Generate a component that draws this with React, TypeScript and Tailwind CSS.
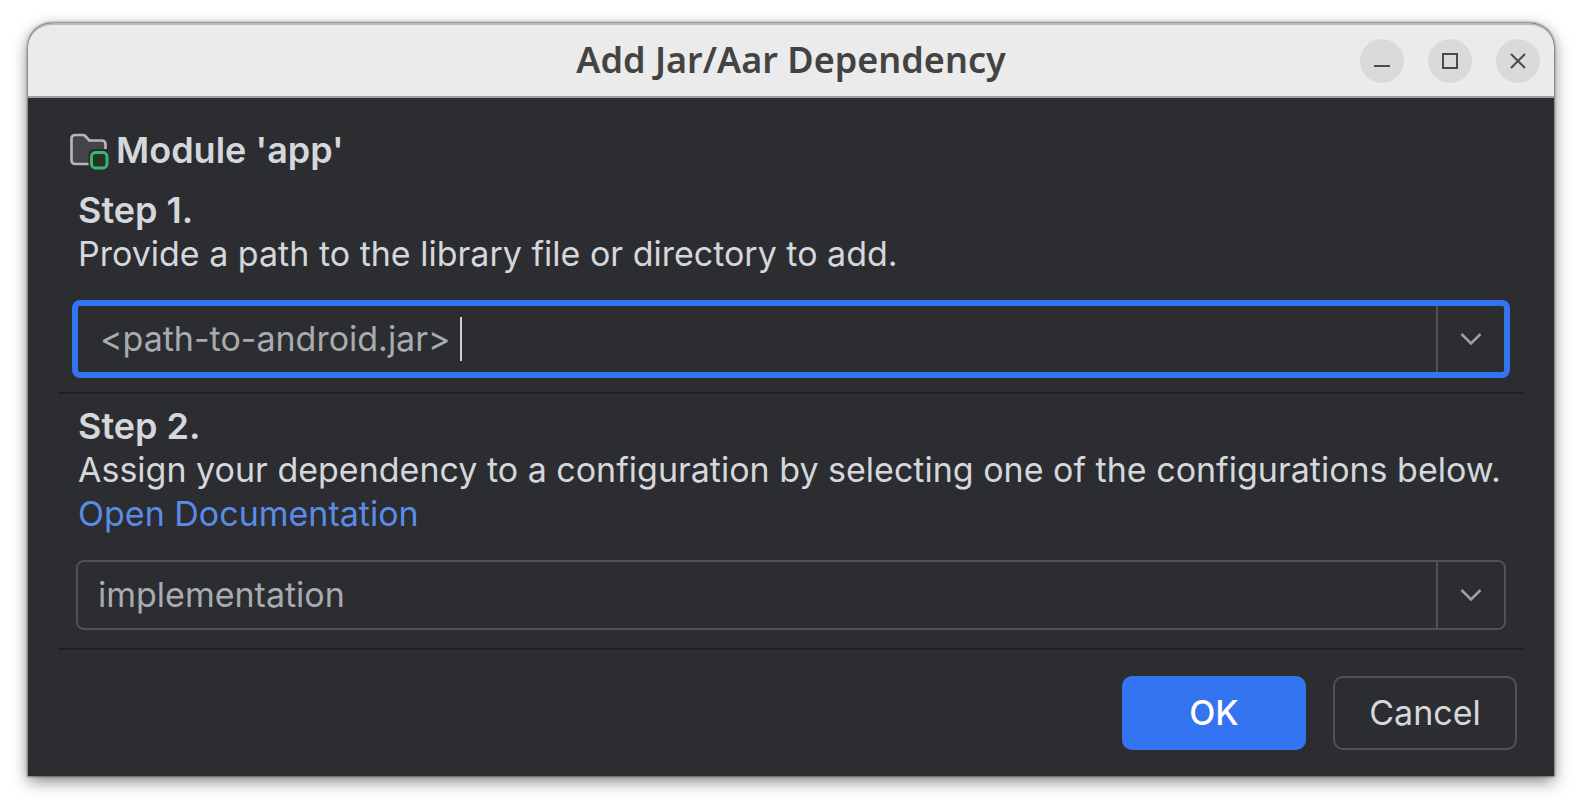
import { useState } from "react";
import type { ReactNode } from "react";

function WindowButton({ label, children }: { label: string; children: ReactNode }) {
  return (
    <button
      type="button"
      aria-label={label}
      className="flex size-11 items-center justify-center rounded-full bg-[#dadada] text-[#4a4a4a]"
    >
      <svg viewBox="0 0 18 18" className="size-[18px]" fill="none" stroke="currentColor" strokeWidth="2" aria-hidden="true">
        {children}
      </svg>
    </button>
  );
}

function Chevron() {
  return (
    <svg viewBox="0 0 22 14" className="h-[14px] w-[22px]" fill="none" stroke="#9da0a8" strokeWidth="2.5" aria-hidden="true">
      <path d="M1.5 2 11 11.500 20.500 2" />
    </svg>
  );
}

function ModuleIcon() {
  return (
    <svg viewBox="0 0 40 38" className="mt-1 h-[38px] w-10" fill="none" aria-hidden="true">
      <path
        d="M18.500 31H5A3.500 3.500 0 0 1 1.500 27.500V5.500A3.500 3.500 0 0 1 5 2H13A3 3 0 0 1 15.200 3L19.300 7.500H32A3.500 3.500 0 0 1 35.500 11V16H24A5 5 0 0 0 18.500 21Z"
        fill="#43454a"
      />
      <path
        d="M18.500 31H5A3.500 3.500 0 0 1 1.500 27.500V5.500A3.500 3.500 0 0 1 5 2H13A3 3 0 0 1 15.200 3L19.300 7.500H32A3.500 3.500 0 0 1 35.500 11V16"
        stroke="#b4b6bd"
        strokeWidth="2.700"
      />
      <rect x="21.500" y="19.500" width="15.500" height="15.500" rx="4" fill="#253627" stroke="#38b871" strokeWidth="2.900" />
    </svg>
  );
}

function Separator() {
  return <hr className="h-[2px] border-0 bg-[#1f2024]" />;
}

export default function App() {
  const [path, setPath] = useState("<path-to-android.jar> ");
  return (
    <div className="min-h-screen bg-white px-7 pt-[23px] pb-8 font-['Inter',sans-serif] text-[34px] leading-[44px] text-[#d5d7dc]">
      <main className="rounded-t-[24px] bg-[#2b2d30] shadow-[0_5px_16px_rgba(0,0,0,0.5),0_0_2px_1px_rgba(0,0,0,0.4)]">
        <header className="grid h-[75px] grid-cols-[1fr_auto_1fr] items-center rounded-t-[24px] border-t-2 border-b-2 border-t-[#b9b9b9] border-b-[#a0a0a0] bg-[#ebebeb] px-[14px]">
          <h1 className="col-start-2 pb-[2px] font-['Noto_Sans',sans-serif] text-[36px] font-semibold text-[#434343]">
            Add Jar/Aar Dependency
          </h1>
          <div className="flex justify-end gap-6">
            <WindowButton label="Minimize">
              <path d="M1 14H17" />
            </WindowButton>
            <WindowButton label="Maximize">
              <path d="M2 2H16V16H2Z" />
            </WindowButton>
            <WindowButton label="Close">
              <path d="M2 2 16 16M16 2 2 16" />
            </WindowButton>
          </div>
        </header>

        <form className="px-[30px] pt-[30px] pb-[26px]" onSubmit={(e) => e.preventDefault()}>
          <div className="flex items-center gap-[6px] pl-3">
            <ModuleIcon />
            <h2 className="text-[36px] font-semibold">Module 'app'</h2>
          </div>

          <section className="px-[14px] pt-4 pb-[14px]">
            <h3 className="px-[6px] text-[36px] font-semibold">Step 1.</h3>
            <label htmlFor="path" className="block px-[6px]">
              Provide a path to the library file or directory to add.
            </label>
            <div className="mt-6 flex h-[78px] items-stretch rounded-lg border-[6px] border-[#3574f0] text-[#a8abb0]">
              <div className="flex flex-1 items-center pl-[22px]">
                <input
                  id="path"
                  value={path}
                  onChange={(e) => setPath(e.target.value)}
                  className="field-sizing-content bg-transparent whitespace-pre caret-transparent outline-none"
                />
                <span className="h-11 w-[2px] bg-[#ced0d6]" />
              </div>
              <button
                type="button"
                aria-label="Recent paths"
                className="flex w-[68px] items-center justify-center border-l-2 border-[#4e5157]"
              >
                <Chevron />
              </button>
            </div>
          </section>

          <Separator />

          <section className="px-[18px] pt-[10px] pb-[18px]">
            <h3 className="px-[2px] text-[36px] font-semibold">Step 2.</h3>
            <label htmlFor="configuration" className="block px-[2px] whitespace-nowrap">
              Assign your dependency to a configuration by selecting one of the configurations below.
            </label>
            <a href="#documentation" className="ml-[2px] inline-block text-[#5b8be8]">
              Open Documentation
            </a>
            <div className="mt-6 grid h-[70px] grid-cols-[1fr_68px] items-stretch rounded-lg border-2 border-[#4e5157] text-[#a8abb0]">
              <select
                id="configuration"
                className="col-span-2 col-start-1 row-start-1 appearance-none bg-transparent pl-5 outline-none"
              >
                <option>implementation</option>
              </select>
              <span className="pointer-events-none col-start-2 row-start-1 flex items-center justify-center border-l-2 border-[#4e5157]">
                <Chevron />
              </span>
            </div>
          </section>

          <Separator />

          <div className="flex justify-end gap-[27px] pt-[26px] pr-[7px]">
            <button type="submit" className="h-[74px] w-[184px] rounded-[10px] bg-[#3574f0] font-medium text-white">
              OK
            </button>
            <button type="button" className="h-[74px] w-[184px] rounded-[10px] border-2 border-[#4e5157]">
              Cancel
            </button>
          </div>
        </form>
      </main>
    </div>
  );
}
